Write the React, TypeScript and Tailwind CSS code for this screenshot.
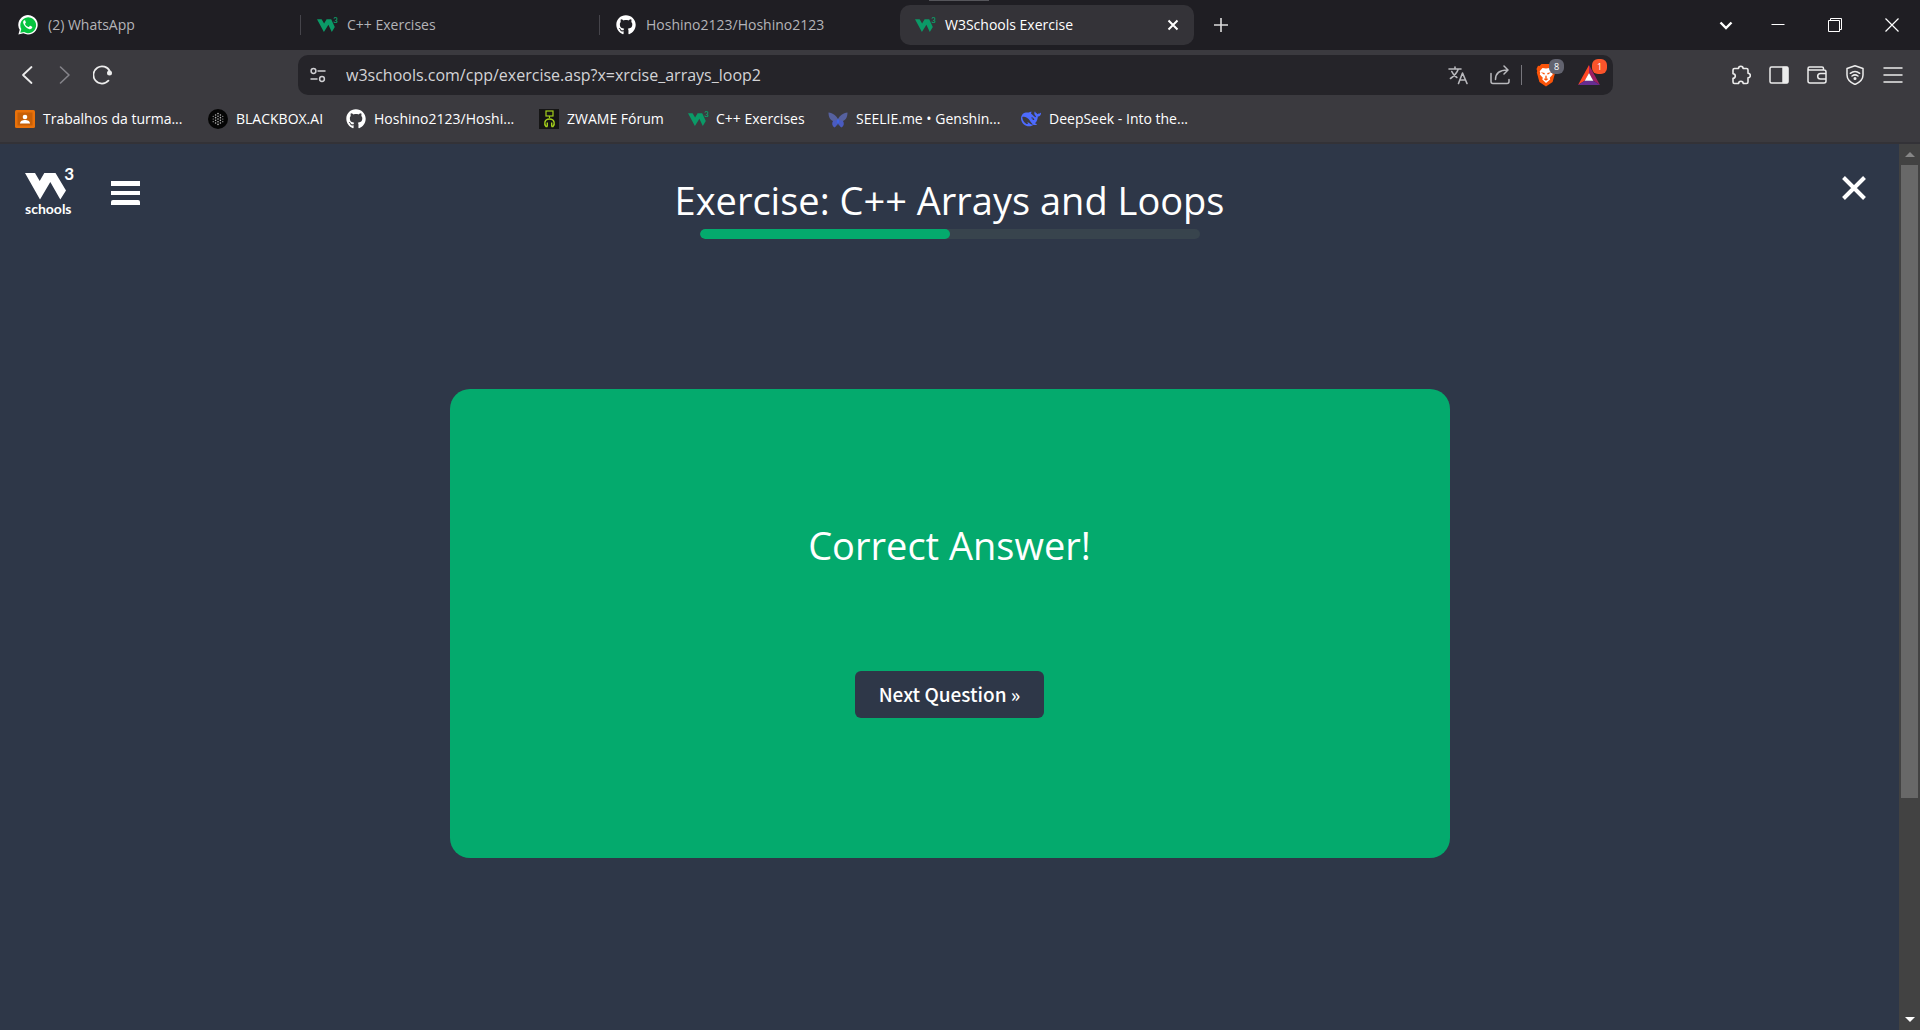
import type { ReactNode } from "react";
import { FaGithub } from "react-icons/fa";

function WhatsAppIcon() {
  return (
    <svg viewBox="0 0 20 20" className="size-5 shrink-0" aria-hidden="true">
      <path d="M.4 19.6 1.7 14.8A9.7 9.7 0 1 1 5.4 18.3Z" fill="#fff" />
      <path d="M2.3 17.7l1-3.6A7.9 7.9 0 1 1 6.1 17Z" fill="#06c33f" />
      <path
        d="M7.2 5.6c-.3-.5-1-.4-1.4 0-1 1.100-.8 2.500 0 3.900 1.200 2 2.900 3.600 5.100 4.400 1.300.5 2.600.2 3.200-.9.300-.6.300-1.100 0-1.300l-1.700-.9c-.3-.1-.5-.1-.7.200l-.7.900c-.2.200-.4.200-.7.100-1.400-.6-2.500-1.500-3.200-2.800-.1-.3-.1-.4.100-.6l.6-.8c.1-.2.100-.4 0-.6Z"
        fill="#fff"
      />
    </svg>
  );
}

function W3Favicon() {
  return (
    <span className="relative block size-5 shrink-0 text-[#0b9a67]" aria-hidden="true">
      <svg viewBox="0 0 20 20" className="size-5" fill="currentColor">
        <path d="M0 4.300H4.600L7.100 8.500 9.600 4.300H14.200L17.800 12 14.800 17 11.400 9.700 6.900 17Z" />
      </svg>
      <span className="absolute top-0 -right-px font-['Lato'] text-[8px] leading-[10px] font-bold">3</span>
    </span>
  );
}

function ClassroomIcon() {
  return (
    <svg viewBox="0 0 20 20" className="size-5 shrink-0" aria-hidden="true">
      <rect y="1" width="20" height="18" rx="1.500" fill="#e8710a" />
      <rect x="2.500" y="3.500" width="15" height="13" fill="#c75f06" />
      <circle cx="10" cy="8" r="2.300" fill="#fff" />
      <path d="M5 14.500c0-2.500 2.500-3.500 5-3.500s5 1 5 3.500Z" fill="#fff" />
    </svg>
  );
}

function BlackboxIcon() {
  const dots: ReactNode[] = [];
  for (let row = -2; row <= 2; row++) {
    const count = 5 - Math.abs(row);
    for (let i = 0; i < count; i++) {
      dots.push(
        <circle
          key={`${row}:${i}`}
          cx={10 + row * 2.4}
          cy={10 + (i - (count - 1) / 2) * 2.7}
          r={Math.abs(row) === 2 ? 0.6 : 0.8}
          fill="#b5b5b5"
        />,
      );
    }
  }
  return (
    <svg viewBox="0 0 20 20" className="size-5 shrink-0" aria-hidden="true">
      <circle cx="10" cy="10" r="10" fill="#050505" />
      {dots}
    </svg>
  );
}

function ZwameIcon() {
  return (
    <svg viewBox="0 0 20 20" className="size-5 shrink-0" fill="none" stroke="#a3cf1b" aria-hidden="true">
      <rect width="20" height="20" fill="#151515" stroke="none" />
      <rect x="7" y="2" width="7" height="5" strokeWidth="1.200" />
      <path d="M10.500 7v2" strokeWidth="1.200" />
      <path d="M8.500 17.500H7C5 15.500 5 10 10.500 10S16 15.500 14 17.500H12.500M8.300 17.500v-4M12.700 17.500v-4" strokeWidth="1.400" />
    </svg>
  );
}

function SeelieIcon() {
  return (
    <svg viewBox="0 0 20 20" className="size-5 shrink-0" aria-hidden="true">
      <path d="M.5 3.500C5 4 8.500 6.500 10 10.500 11.500 6.500 15 4 19.500 3.500c0 4-1.500 7.500-4.500 8.500H5C2 11 .5 7.500.5 3.500Z" fill="#56619f" />
      <path d="M10 10.500 15 12c1.500 2 1 5-1.500 6.500-1.500-1-2.500-2.500-3.500-4.500-1 2-2 3.500-3.500 4.500C4 17 3.500 14 5 12Z" fill="#4a5bc0" />
      <path d="M10 9l1 3-1 5-1-5Z" fill="#3d66e8" />
    </svg>
  );
}

function DeepSeekIcon() {
  return (
    <svg viewBox="0 0 24 24" className="size-5 shrink-0" aria-hidden="true">
      <path
        fill="#4d6bfe"
        d="M23.748 4.482c-.254-.124-.364.113-.512.234-.051.039-.094.090-.137.136-.372.397-.806.657-1.373.626-.829-.046-1.537.214-2.163.848-.133-.782-.575-1.248-1.247-1.548-.352-.156-.708-.311-.955-.650-.172-.241-.219-.510-.305-.774-.055-.160-.110-.323-.293-.350-.200-.031-.278.136-.356.276-.313.572-.434 1.202-.422 1.840.027 1.436.633 2.580 1.838 3.393.137.093.172.187.129.323-.082.280-.180.552-.266.833-.055.179-.137.217-.329.140a5.526 5.526 0 0 1-1.736-1.180c-.857-.828-1.631-1.742-2.597-2.458a11.365 11.365 0 0 0-.689-.471c-.985-.957.130-1.743.388-1.836.270-.098.093-.432-.779-.428-.872.004-1.670.295-2.687.684a3.055 3.055 0 0 1-.465.137 9.597 9.597 0 0 0-2.883-.102c-1.885.210-3.390 1.102-4.497 2.623C.082 8.606-.231 10.684.152 12.850c.403 2.284 1.569 4.175 3.360 5.653 1.858 1.533 3.997 2.284 6.438 2.140 1.482-.085 3.133-.284 4.994-1.860.470.234.962.327 1.780.397.630.059 1.236-.030 1.705-.128.735-.156.684-.837.419-.961-2.155-1.004-1.682-.595-2.113-.926 1.096-1.296 2.746-2.642 3.392-7.003.050-.347.007-.565 0-.845-.004-.170.035-.237.230-.256a4.173 4.173 0 0 0 1.545-.475c1.396-.763 1.960-2.015 2.093-3.517.020-.230-.004-.467-.247-.588zM11.581 18c-2.089-1.642-3.102-2.183-3.520-2.160-.392.024-.321.471-.235.763.090.288.207.486.371.739.114.167.192.416-.113.603-.673.416-1.842-.140-1.897-.167-1.361-.802-2.500-1.860-3.301-3.307-.774-1.393-1.224-2.887-1.298-4.482-.020-.386.093-.522.477-.592a4.696 4.696 0 0 1 1.529-.039c2.132.312 3.946 1.265 5.468 2.774.868.860 1.525 1.887 2.202 2.891.720 1.066 1.494 2.082 2.480 2.914.348.292.625.514.891.677-.802.090-2.140.110-3.054-.614zm1-6.440a.306.306 0 0 1 .415-.287.302.302 0 0 1 .200.288.306.306 0 0 1-.310.307.303.303 0 0 1-.304-.308zm3.110 1.596c-.200.081-.399.151-.590.160a1.245 1.245 0 0 1-.798-.254c-.274-.230-.470-.358-.552-.758a1.730 1.730 0 0 1 .016-.588c.070-.327-.008-.537-.239-.727-.187-.156-.426-.199-.688-.199a.559.559 0 0 1-.254-.078c-.110-.054-.200-.190-.114-.358.028-.054.160-.186.192-.210.356-.202.767-.136 1.146.016.352.144.618.408 1.001.782.391.451.462.576.685.914.176.265.336.537.445.848.067.195-.019.354-.250.452z"
      />
    </svg>
  );
}

function LineIcon({ children, width = 1.3 }: { children: ReactNode; width?: number }) {
  return (
    <svg
      viewBox="0 0 20 20"
      className="size-5 shrink-0"
      fill="none"
      stroke="currentColor"
      strokeWidth={width}
      strokeLinecap="round"
      strokeLinejoin="round"
      aria-hidden="true"
    >
      {children}
    </svg>
  );
}

function BraveIcon() {
  return (
    <svg viewBox="0 0 20 24" className="h-6 w-5 shrink-0" aria-hidden="true">
      <path d="M5.500 1h9l2 2 1.500-.2L19.500 6l-.7 2 .4 1.500-2.600 9.500L10 23.500 3.400 19 .8 9.500 1.200 8 .5 6 2 2.800 3.500 3Z" fill="#fb5409" />
      <path d="M10 5.500 13.500 5l3.300 3.300-.5 1.700.4 1.600-3 3.200.5 1.700L10 20l-3.700-3.500.5-1.700-3-3.200.4-1.600-.5-1.700L6.500 5Z" fill="#fff" />
      <path d="M4.800 9.300 8.800 10l-.5 1.800ZM15.200 9.300l-4 .7.500 1.800ZM10 12l1 2.300-1 .9-1-.9ZM7.600 16l2.400-1 2.400 1-2.400 1.700Z" fill="#fb5409" />
    </svg>
  );
}

function BatIcon() {
  return (
    <svg viewBox="0 0 24 22" className="h-[22px] w-6 shrink-0" aria-hidden="true">
      <path d="M12 1 1 21l7-4.500L12 9Z" fill="#ff4724" />
      <path d="M12 1l11 20-7-4.500L12 9Z" fill="#9e1f63" />
      <path d="M1 21h22l-7-4.500H8Z" fill="#662d91" />
      <path d="M12 9l4.300 7.700H7.700Z" fill="#fff" />
    </svg>
  );
}

type Tab = { title: string; icon: ReactNode; active?: boolean; separator?: boolean };

const tabs: Tab[] = [
  { title: "(2) WhatsApp", icon: <WhatsAppIcon />, separator: true },
  { title: "C++ Exercises", icon: <W3Favicon />, separator: true },
  { title: "Hoshino2123/Hoshino2123", icon: <FaGithub className="size-5 shrink-0 text-white" /> },
  { title: "W3Schools Exercise", icon: <W3Favicon />, active: true },
];

const bookmarks: { title: string; icon: ReactNode; width: string }[] = [
  { title: "Trabalhos da turma...", icon: <ClassroomIcon />, width: "w-[173px]" },
  { title: "BLACKBOX.AI", icon: <BlackboxIcon />, width: "w-[118px]" },
  { title: "Hoshino2123/Hoshi...", icon: <FaGithub className="size-5 shrink-0" />, width: "w-[173px]" },
  { title: "ZWAME Fórum", icon: <ZwameIcon />, width: "w-[129px]" },
  { title: "C++ Exercises", icon: <W3Favicon />, width: "w-[120px]" },
  { title: "SEELIE.me • Genshin...", icon: <SeelieIcon />, width: "w-[173px]" },
  { title: "DeepSeek - Into the...", icon: <DeepSeekIcon />, width: "w-[173px]" },
];

function TabStrip() {
  return (
    <div className="relative flex h-[50px] items-center bg-[#1f1e23]">
      <div className="absolute top-0 left-[929px] h-px w-[60px] bg-[#55555a]" />
      <div role="tablist" className="flex gap-[5px] pl-[3px]">
        {tabs.map((tab) => (
          <div
            key={tab.title}
            className={`relative flex h-10 w-[294px] items-center rounded-[10px] pr-[13px] pl-[15px] ${
              tab.active ? "bg-[#343338] text-white" : "text-[#b4b4b8]"
            }`}
          >
            <button role="tab" aria-selected={!!tab.active} className="flex flex-1 items-center gap-[10px] whitespace-nowrap">
              {tab.icon}
              <span>{tab.title}</span>
            </button>
            {tab.active && (
              <button aria-label="Close tab">
                <svg viewBox="0 0 16 16" className="size-4" stroke="#fff" strokeWidth="2" aria-hidden="true">
                  <path d="M3.500 3.500l9 9M12.500 3.500l-9 9" />
                </svg>
              </button>
            )}
            {tab.separator && <span className="absolute top-[10px] -right-1 h-5 w-px bg-[#45444a]" />}
          </div>
        ))}
      </div>
      <button aria-label="New tab" className="ml-[17px] text-[#dcdcdc]">
        <svg viewBox="0 0 20 20" className="size-5" stroke="currentColor" strokeWidth="1.600" aria-hidden="true">
          <path d="M10 3v14M3 10h14" />
        </svg>
      </button>
      <div className="ml-auto flex h-full text-white">
        <button aria-label="Search tabs" className="flex w-[46px] items-center justify-center">
          <svg viewBox="0 0 16 16" className="size-4" fill="none" stroke="currentColor" strokeWidth="2.400" aria-hidden="true">
            <path d="M2.500 5.500 8 11l5.500-5.500" />
          </svg>
        </button>
        <button aria-label="Minimize" className="flex w-[57px] items-center justify-center">
          <svg viewBox="0 0 14 14" className="size-[14px]" stroke="currentColor" aria-hidden="true">
            <path d="M.5 6.500h13" />
          </svg>
        </button>
        <button aria-label="Restore" className="flex w-[57px] items-center justify-center">
          <svg viewBox="0 0 14 14" className="size-[14px]" fill="none" stroke="currentColor" aria-hidden="true">
            <path d="M.5 2.500h11v11H.5ZM2.500 2.500v-2h11v11h-2" />
          </svg>
        </button>
        <button aria-label="Close" className="flex w-[57px] items-center justify-center">
          <svg viewBox="0 0 14 14" className="size-[14px]" stroke="currentColor" strokeWidth="1.200" aria-hidden="true">
            <path d="M.5.5l13 13M13.500.5l-13 13" />
          </svg>
        </button>
      </div>
    </div>
  );
}

function AddressRow() {
  return (
    <div className="flex h-[50px] items-center text-[#ececec]">
      <div className="flex w-[298px] shrink-0 items-center gap-[18px] pl-[17px]">
        <button aria-label="Back">
          <LineIcon width={1.8}><path d="M14.500 2 6 10l8.500 8" /></LineIcon>
        </button>
        <button aria-label="Forward" className="text-[#85848a]">
          <LineIcon width={1.6}><path d="M5.500 2 14 10l-8.500 8" /></LineIcon>
        </button>
        <button aria-label="Reload">
          <LineIcon width={1.8}>
            <path d="M15.400 15.700A8.600 8.600 0 1 1 16.800 6.300" />
            <circle cx="16.500" cy="8" r="1.600" fill="currentColor" />
          </LineIcon>
        </button>
      </div>
      <div className="flex h-10 flex-1 items-center rounded-[10px] bg-[#252429] pr-3 pl-[10px]">
        <button aria-label="Site settings" className="text-[#cfcfd2]">
          <LineIcon width={1.5}>
            <circle cx="5.500" cy="6" r="2.400" />
            <path d="M10 6h7M3 14h6" />
            <circle cx="14" cy="14" r="2.400" />
          </LineIcon>
        </button>
        <input
          aria-label="Address"
          className="ml-[18px] h-8 min-w-0 flex-1 bg-transparent text-base text-[#d3d3d6] outline-none"
          defaultValue="w3schools.com/cpp/exercise.asp?x=xrcise_arrays_loop2"
        />
        <button aria-label="Translate" className="text-[#b9b9bd]">
          <LineIcon width={1.6}>
            <path d="M1 4h12M7 2v2M2.500 13.500C6 11 9 8 10.300 4M3.800 6.500c1 2.500 2.800 4.500 5 6M10.500 18.500l4-10.500 4.500 10.500M12 15h5.500" />
          </LineIcon>
        </button>
        <button aria-label="Share" className="ml-[22px] text-[#b9b9bd]">
          <LineIcon width={1.5}>
            <path d="M1 8.500v8a2 2 0 0 0 2 2h14a2 2 0 0 0 2-2v-2M5.500 14.500c0-6 3-9.500 12-9.500M14 1l4 4-4 4" />
          </LineIcon>
        </button>
        <span className="ml-[11px] h-5 w-px bg-[#77767c]" />
        <button aria-label="Brave Shields" className="relative ml-[14px]">
          <BraveIcon />
          <span className="absolute -top-[4px] -right-[8px] flex size-[15px] items-center justify-center rounded-md bg-[#62636f] text-[9px] leading-none text-white">
            8
          </span>
        </button>
        <button aria-label="Brave Rewards" className="relative ml-[21px]">
          <BatIcon />
          <span className="absolute -top-[5px] -right-[6px] flex size-[15px] items-center justify-center rounded-md bg-[#fb542b] text-[9px] leading-none text-white">
            1
          </span>
        </button>
      </div>
      <div className="flex w-[307px] shrink-0 items-center justify-end gap-[18px] pr-[17px]">
        <button aria-label="Extensions">
          <LineIcon width={1.6}>
            <path d="M7.500 3.500a2.300 2.300 0 0 1 4.600 0h3.400a1.500 1.500 0 0 1 1.500 1.500v3.300a2.300 2.300 0 0 1 0 4.600V17a1.500 1.500 0 0 1-1.500 1.500h-3.300a2.300 2.300 0 0 0-4.600 0H3.500A1.500 1.500 0 0 1 2 17v-3.700a2.300 2.300 0 0 0 0-4.600V5a1.500 1.500 0 0 1 1.500-1.500Z" />
          </LineIcon>
        </button>
        <button aria-label="Sidebar">
          <LineIcon width={1.5}>
            <rect x="1" y="2" width="18" height="16" rx="1.500" />
            <path d="M14 2.500h4.500v15H14Z" fill="currentColor" />
          </LineIcon>
        </button>
        <button aria-label="Wallet">
          <LineIcon width={1.5}>
            <path d="M1 4v12a2 2 0 0 0 2 2h14a2 2 0 0 0 2-2V7a2 2 0 0 0-2-2H2.500A1.500 1.500 0 0 1 1 3.500 1.500 1.500 0 0 1 2.500 2H15a1.500 1.500 0 0 1 1.500 1.500V5M19 8.500h-5.500a2.800 2.800 0 0 0 0 5.600H19" />
          </LineIcon>
        </button>
        <button aria-label="VPN">
          <LineIcon width={1.5}>
            <path d="M10 .8 18 3.500v6.500c0 4.500-3.500 7.500-8 9.500-4.500-2-8-5-8-9.500V3.500Z" />
            <path d="M5.300 8.300c3-2.400 6.400-2.400 9.400 0M7 11c2-1.500 4-1.500 6 0" />
            <circle cx="10" cy="13.500" r=".8" fill="currentColor" />
          </LineIcon>
        </button>
        <button aria-label="Menu">
          <LineIcon width={1.5}>
            <path d="M1 3h18M1 10h18M1 17h18" />
          </LineIcon>
        </button>
      </div>
    </div>
  );
}

function BookmarksBar() {
  return (
    <nav aria-label="Bookmarks" className="flex h-[42px] items-center gap-5 pb-1 pl-[15px] text-white">
      {bookmarks.map((b) => (
        <a key={b.title} href="#" className={`flex shrink-0 items-center gap-2 whitespace-nowrap ${b.width}`}>
          {b.icon}
          <span>{b.title}</span>
        </a>
      ))}
    </nav>
  );
}

function Scrollbar() {
  return (
    <div className="flex w-[21px] shrink-0 flex-col items-center justify-between bg-[#424242]" aria-hidden="true">
      <div className="flex h-[21px] items-center">
        <svg viewBox="0 0 10 5" className="h-[5px] w-[10px]" fill="#868686"><path d="M5 0l5 5H0Z" /></svg>
      </div>
      <div className="min-h-0 w-[17px] flex-1">
        <div className="h-3/4 bg-[#686868]" />
      </div>
      <div className="flex h-[21px] items-center">
        <svg viewBox="0 0 10 5" className="h-[5px] w-[10px]" fill="#fff"><path d="M0 0h10L5 5Z" /></svg>
      </div>
    </div>
  );
}

function W3Logo() {
  return (
    <a href="#" aria-label="W3Schools home" className="relative block w-[49px] text-white">
      <svg viewBox="0 0 49 30" className="mt-1 h-[30px] w-[49px]" fill="currentColor" aria-hidden="true">
        <path d="M0 0H10L14.700 8 19.300 0H30.500L41 17.500 35.300 26.500 25.300 9 15 26.500Z" />
      </svg>
      <span className="absolute -top-[5px] right-0 font-['Lato'] text-[17px] leading-5 font-bold">3</span>
      <span className="block font-['Lato'] text-[14px] leading-3 font-bold">schools</span>
    </a>
  );
}

function ExercisePage() {
  return (
    <main className="flex-1 bg-[#2e3748] text-white">
      <header className="flex items-start justify-between px-[25px]">
        <div className="flex flex-1 gap-[37px] pt-[25px]">
          <W3Logo />
          <button aria-label="Open menu" className="mt-3 flex h-6 w-[29px] flex-col justify-between">
            <span className="h-[5px] w-full bg-white" />
            <span className="h-1 w-full bg-white" />
            <span className="h-[5px] w-full rounded-t-xs bg-white" />
          </button>
        </div>
        <div className="flex flex-col items-center pt-7">
          <h1 className="text-[38px] leading-[57px] whitespace-nowrap">Exercise: C++ Arrays and Loops</h1>
          <div
            role="progressbar"
            aria-label="Exercise progress"
            aria-valuenow={50}
            className="h-[10px] w-[500px] overflow-hidden rounded-full bg-[#38444d]"
          >
            <div className="h-full w-1/2 rounded-full bg-[#04aa6d]" />
          </div>
        </div>
        <div className="flex flex-1 justify-end pt-[31px]">
          <button aria-label="Close exercise" className="mr-[7px]">
            <svg viewBox="0 0 26 26" className="size-[26px]" stroke="#fff" strokeWidth="4" aria-hidden="true">
              <path d="M2.500 2.500l21 21M23.500 2.500l-21 21" />
            </svg>
          </button>
        </div>
      </header>
      <section className="mx-auto mt-[150px] flex h-[469px] w-[1000px] flex-col items-center rounded-[20px] bg-[#04aa6d] pt-32">
        <h2 className="text-[38px] leading-[57px]">Correct Answer!</h2>
        <button className="mt-[97px] h-[47px] rounded-md bg-[#2e3748] px-6 pb-[2px] font-['Noto_Sans_CJK_SC',sans-serif] text-[19px] leading-7 font-medium">
          Next Question »
        </button>
      </section>
    </main>
  );
}

export default function App() {
  return (
    <div className="flex h-screen flex-col overflow-hidden font-['Open_Sans',sans-serif] text-sm">
      <TabStrip />
      <div className="border-b-2 border-[#333237] bg-[#3b3a3f]">
        <AddressRow />
        <BookmarksBar />
      </div>
      <div className="flex min-h-0 flex-1">
        <ExercisePage />
        <Scrollbar />
      </div>
    </div>
  );
}
